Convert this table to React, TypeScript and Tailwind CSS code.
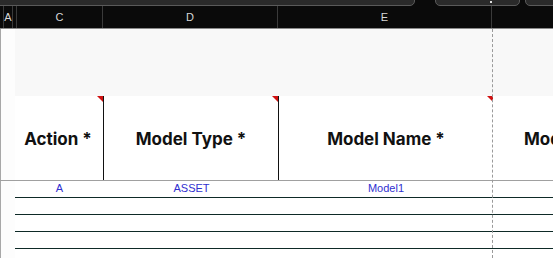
import React from "react";

const headFont = { fontFamily: "Inter, 'Liberation Sans', sans-serif" };

function Corner() {
  return (
    <div className="absolute right-0 top-0 h-0 w-0 border-l-[6px] border-t-[6px] border-l-transparent border-t-[#d01010]" />
  );
}

export default function App() {
  return (
    <div className="relative h-[258px] w-[553px] overflow-hidden bg-[#0a0a0a]" style={{ fontFamily: "'Liberation Sans', sans-serif" }}>
      {/* top toolbar strip */}
      <div className="flex h-[6px] gap-0 overflow-hidden">
        <div className="-mt-[6px] ml-[-10px] h-[12px] w-[425px] shrink-0 rounded-b-[5px] border border-[#5a5a5a] bg-[#2a2a2a]" />
        <div className="relative -mt-[6px] ml-[20px] h-[12px] w-[85px] shrink-0 rounded-b-[5px] border border-[#5a5a5a] bg-[#2a2a2a]">
          <div className="absolute bottom-[2px] left-[54px] h-[2px] w-[2px] bg-[#ddd]" />
        </div>
        <div className="-mt-[6px] ml-[5px] h-[12px] w-[60px] shrink-0 rounded-b-[5px] border border-[#5a5a5a] bg-[#2a2a2a]" />
      </div>
      {/* column header letters */}
      <div className="flex h-[23px] items-center border-b border-[#8a8a8a] text-[11px] text-[#d8d8d8]">
        <div className="h-full w-[4px] border-r border-[#3a3a3a]" />
        <div className="flex h-full w-[9px] items-center justify-center border-r border-[#3a3a3a]">A</div>
        <div className="h-full w-[4px] border-r border-[#3a3a3a]" />
        <div className="flex h-full w-[86px] items-center justify-center border-r border-[#3a3a3a]">C</div>
        <div className="flex h-full w-[175px] items-center justify-center border-r border-[#3a3a3a]">D</div>
        <div className="flex h-full w-[214px] items-center justify-center border-r border-[#3a3a3a]">E</div>
        <div className="h-full flex-1" />
      </div>
      {/* sheet body */}
      <div className="relative flex h-[229px] border-l border-[#a8a8a8] bg-[#f8f8f8]">
        <div className="w-[14px] shrink-0 bg-[#fdfdfd]" />
        <div className="flex flex-1 flex-col">
          <div className="h-[67px]" />
          <div className="flex h-[84px] text-[17px] font-bold text-[#111]" style={headFont}>
            <div className="relative flex w-[89px] shrink-0 items-center justify-center border-r border-[#111] bg-white pr-[2px] pt-[3px]">
              Action *
              <Corner />
            </div>
            <div className="relative flex w-[175px] shrink-0 items-center justify-center border-r border-[#111] bg-white pt-[3px]">
              Model Type *
              <Corner />
            </div>
            <div className="relative flex w-[214px] shrink-0 items-center justify-center bg-white pt-[3px]">
              Model Name *
              <Corner />
            </div>
            <div className="flex flex-1 items-center bg-white pl-[31px] pt-[3px]">
              <span className="whitespace-nowrap">Model Type</span>
            </div>
          </div>
          <div className="-ml-[15px] h-px bg-[#a0a0a0]" />
          <div className="flex-1 bg-white">
            <div className="flex h-[17px] items-center border-b border-[#0e2a27] pb-px text-[11px] text-[#3030d0]">
              <div className="w-[89px] text-center">A</div>
              <div className="w-[175px] text-center">ASSET</div>
              <div className="w-[214px] text-center">Model1</div>
            </div>
            <div className="h-[17px] border-b border-[#0e2a27]" />
            <div className="h-[17px] border-b border-[#0e2a27]" />
            <div className="h-[17px] border-b border-[#0e2a27]" />
          </div>
        </div>
        {/* freeze pane line */}
        <div className="absolute bottom-0 left-[491px] top-0 border-l border-dashed border-[#9a9a9a]" />
      </div>
    </div>
  );
}
